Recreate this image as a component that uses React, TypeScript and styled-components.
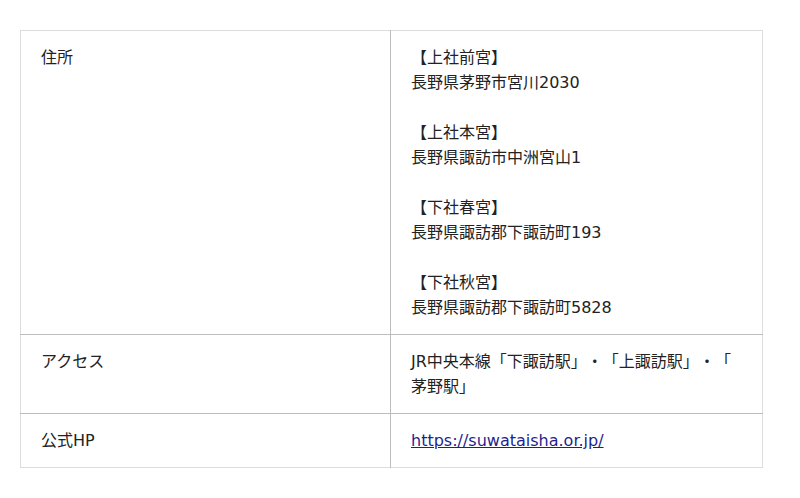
import React from "react";
import styled, { createGlobalStyle } from "styled-components";

const Global = createGlobalStyle`
  html, body { margin: 0; padding: 0; background: #fff; }
  body {
    font-family: "DejaVu Sans", "Noto Sans CJK JP", sans-serif;
    color: #222;
  }
`;

const Page = styled.div`
  padding: 30px 38px 0 20px;
`;

const Table = styled.table`
  width: 742px;
  border-collapse: collapse;
  border: 1px solid #dddddd;
  table-layout: fixed;
  font-size: 16px;
  line-height: 25px;
  text-spacing-trim: space-all;
`;

const Col = styled.col<{ $w: number }>`
  width: ${(p) => p.$w}px;
`;

const Row = styled.tr`
  & + & > td {
    border-top: 1px solid #bdbdbd;
  }
`;

const HeadCell = styled.td`
  padding: 14px 20px;
  vertical-align: top;
  border-right: 1px solid #bdbdbd;
`;

const DataCell = styled.td`
  padding: 14px 20px;
  vertical-align: top;
  line-break: anywhere;
`;

const Dot = styled.span`
  font-family: "Noto Sans CJK JP", sans-serif;
  line-height: 1;
`;

const Link = styled.a`
  color: #1f1f8f;
  text-decoration: underline;
`;

const Block = styled.div<{ $gap?: boolean }>`
  margin-top: ${(p) => (p.$gap ? "25px" : "0")};
`;

const addresses = [
  ["【上社前宮】", "長野県茅野市宮川2030"],
  ["【上社本宮】", "長野県諏訪市中洲宮山1"],
  ["【下社春宮】", "長野県諏訪郡下諏訪町193"],
  ["【下社秋宮】", "長野県諏訪郡下諏訪町5828"],
];

export default function App() {
  return (
    <>
      <Global />
      <Page>
        <Table>
          <colgroup>
            <Col $w={370} />
            <Col $w={372} />
          </colgroup>
          <tbody>
            <Row>
              <HeadCell>住所</HeadCell>
              <DataCell>
                {addresses.map(([name, addr], i) => (
                  <Block key={name} $gap={i > 0}>
                    {name}
                    <br />
                    {addr}
                  </Block>
                ))}
              </DataCell>
            </Row>
            <Row>
              <HeadCell>アクセス</HeadCell>
              <DataCell>
                JR中央本線「下諏訪駅」<Dot>・</Dot>「上諏訪駅」<Dot>・</Dot>「茅野駅」
              </DataCell>
            </Row>
            <Row>
              <HeadCell>公式HP</HeadCell>
              <DataCell>
                <Link href="https://suwataisha.or.jp/">https://suwataisha.or.jp/</Link>
              </DataCell>
            </Row>
          </tbody>
        </Table>
      </Page>
    </>
  );
}
